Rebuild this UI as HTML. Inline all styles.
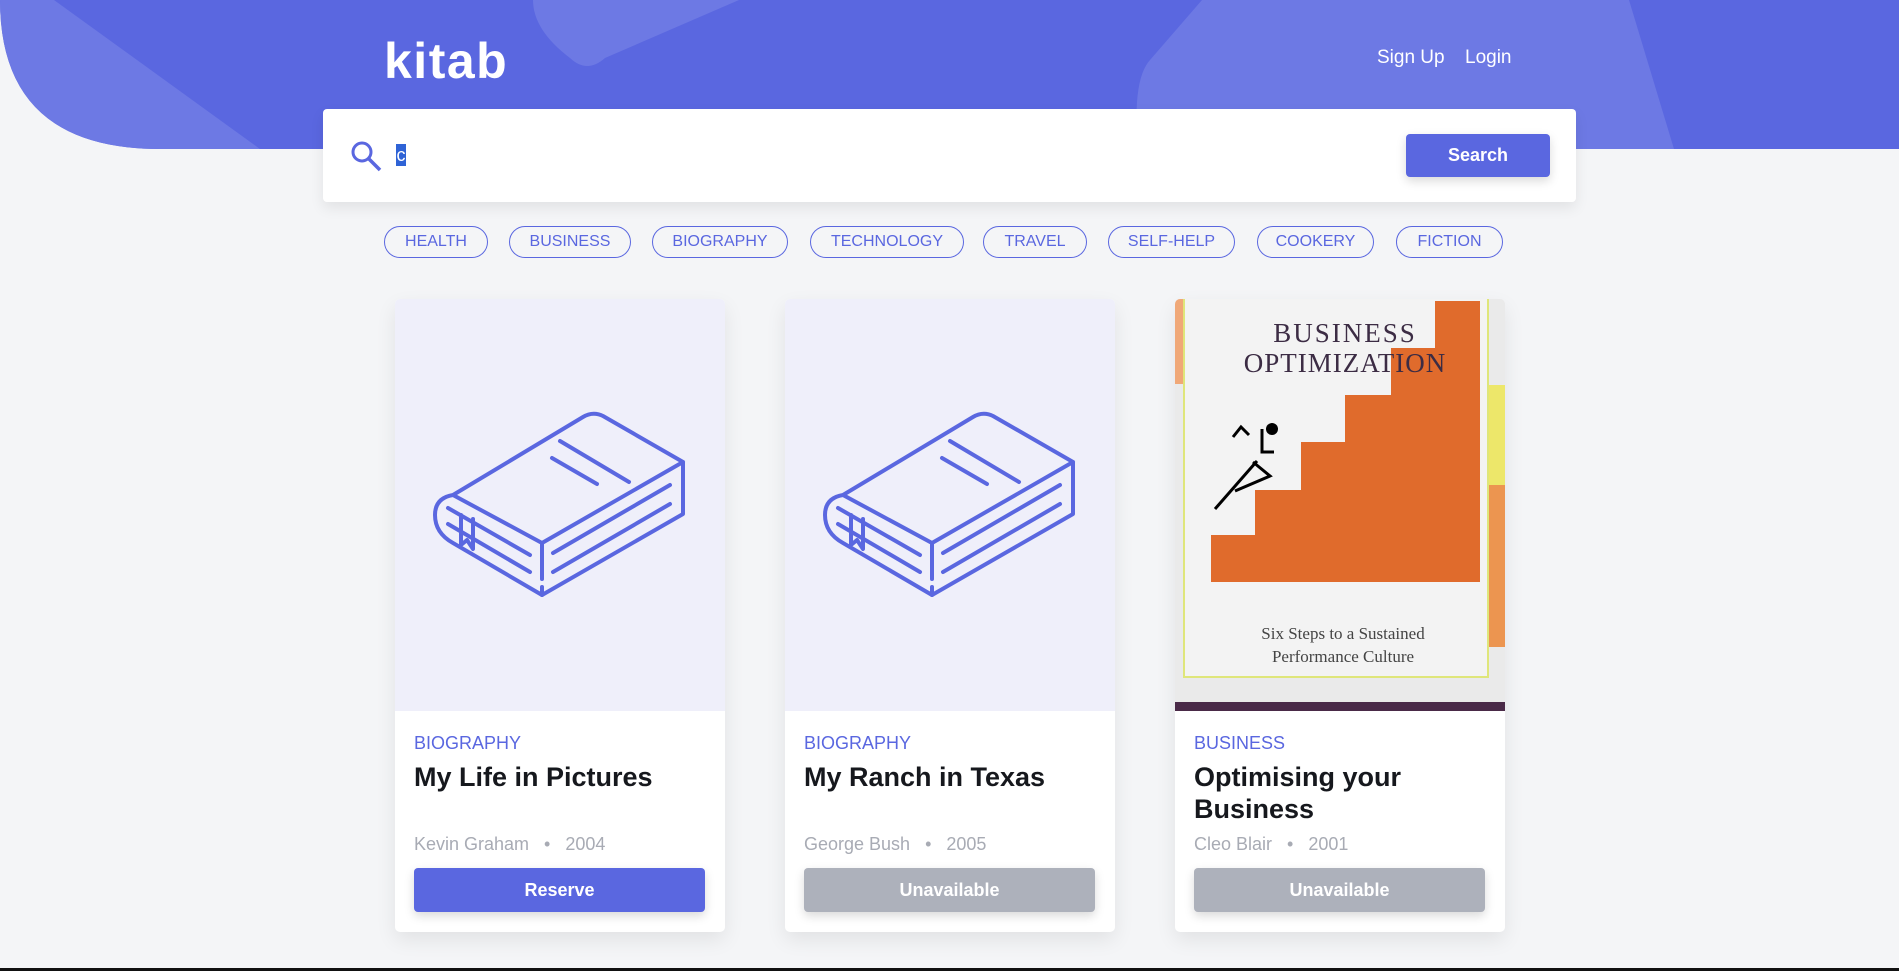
<!DOCTYPE html>
<html><head><meta charset="utf-8"><style>
*{margin:0;padding:0;box-sizing:border-box}
body{width:1899px;height:971px;background:#f4f5f7;font-family:"Liberation Sans",sans-serif;position:relative;overflow:hidden}
.abs{position:absolute}
.logo{left:384px;top:32px;font-size:50px;font-weight:bold;color:#fff;letter-spacing:1.5px}
.nav{top:47px;color:#fff;font-size:19px}
.search{left:323px;top:109px;width:1253px;height:93px;background:#fff;border-radius:4px;box-shadow:0 6px 14px rgba(0,0,0,.08)}
.sbtn{left:1083px;top:25px;width:144px;height:43px;background:#5a67e0;border-radius:4px;color:#fff;font-weight:bold;font-size:18px;text-align:center;line-height:43px;box-shadow:0 4px 10px rgba(0,0,0,.15)}
.chip{top:226px;height:32px;border:1px solid #5a67e0;border-radius:16px;color:#5a67e0;font-size:16px;line-height:30px;text-align:center}
.card{top:299px;width:330px;height:633px;background:#fff;border-radius:5px;box-shadow:0 8px 20px rgba(0,0,0,.08);overflow:hidden}
.img{left:0;top:0;width:330px;height:412px;background:#efeffa}
.cat{left:19px;top:434px;color:#5a67e0;font-size:18px}
.title{left:19px;top:462px;width:300px;color:#16181d;font-size:27px;font-weight:bold;line-height:32px}
.meta{left:19px;top:535px;color:#a8abb4;font-size:18px}
.btn{left:19px;top:569px;width:291px;height:44px;border-radius:4px;color:#fff;font-weight:bold;font-size:18px;text-align:center;line-height:44px;box-shadow:0 4px 10px rgba(0,0,0,.15)}
</style></head><body>
<svg class="abs" style="left:0;top:0" width="1899" height="150">
<path d="M0 0H1899V149H160Q0 149 0 0Z" fill="#5a67e0"/>
<path d="M0 0H54L260 149H160Q0 149 0 0Z" fill="#6d79e4"/>
<path d="M533 0H739L605 58Q587 74 570 58Q533 30 533 0Z" fill="#6d79e4"/>
<path d="M1202 0H1629L1674 149H1138Q1132 80 1150 60Z" fill="#6d79e4"/>
</svg>
<div class="abs logo">kitab</div>
<div class="abs nav" style="left:1377px">Sign Up</div>
<div class="abs nav" style="left:1465px">Login</div>
<div class="abs search">
<svg class="abs" style="left:27px;top:31px" width="36" height="34"><circle cx="12" cy="12" r="9" fill="none" stroke="#5a67e0" stroke-width="3"/><line x1="18.5" y1="18.5" x2="30" y2="30" stroke="#5a67e0" stroke-width="3.5"/></svg>
<div class="abs" style="left:73px;top:35px;width:10px;height:22px;background:#2f63d6;color:#fff;font-size:18px;line-height:22px;text-align:center">c</div>
<div class="abs sbtn">Search</div>
</div>
<div class="abs chip" style="left:384px;width:104px">HEALTH</div>
<div class="abs chip" style="left:509px;width:122px">BUSINESS</div>
<div class="abs chip" style="left:652px;width:136px">BIOGRAPHY</div>
<div class="abs chip" style="left:810px;width:154px">TECHNOLOGY</div>
<div class="abs chip" style="left:983px;width:104px">TRAVEL</div>
<div class="abs chip" style="left:1108px;width:127px">SELF-HELP</div>
<div class="abs chip" style="left:1257px;width:117px">COOKERY</div>
<div class="abs chip" style="left:1396px;width:107px">FICTION</div>

<div class="abs card" style="left:395px">
<div class="abs img"><svg width="330" height="412" fill="none" stroke="#5a67e0" stroke-width="4" stroke-linecap="round" stroke-linejoin="round">
<path d="M58 196L188 118Q198 112 208 117L288 163L147 244L58 196Q40 199 40 216Q40 234 58 244L147 296L288 215V163"/>
<path d="M147 244V280M147 288V296"/><path d="M158 254L275 186M158 273L275 205"/>
<path d="M53 209L135 256M53 225L135 273"/><path d="M165 142L234 183M157 159L202 185"/>
<path d="M66 216V246L72 241L78 250V220"/></svg></div>
<div class="abs cat">BIOGRAPHY</div>
<div class="abs title">My Life in Pictures</div>
<div class="abs meta">Kevin Graham &nbsp;&nbsp;•&nbsp;&nbsp; 2004</div>
<div class="abs btn" style="background:#5a67e0">Reserve</div>
</div>

<div class="abs card" style="left:785px">
<div class="abs img"><svg width="330" height="412" fill="none" stroke="#5a67e0" stroke-width="4" stroke-linecap="round" stroke-linejoin="round">
<path d="M58 196L188 118Q198 112 208 117L288 163L147 244L58 196Q40 199 40 216Q40 234 58 244L147 296L288 215V163"/>
<path d="M147 244V280M147 288V296"/><path d="M158 254L275 186M158 273L275 205"/>
<path d="M53 209L135 256M53 225L135 273"/><path d="M165 142L234 183M157 159L202 185"/>
<path d="M66 216V246L72 241L78 250V220"/></svg></div>
<div class="abs cat">BIOGRAPHY</div>
<div class="abs title">My Ranch in Texas</div>
<div class="abs meta">George Bush &nbsp;&nbsp;•&nbsp;&nbsp; 2005</div>
<div class="abs btn" style="background:#adb1bb">Unavailable</div>
</div>

<div class="abs card" style="left:1175px">
<div class="abs img" style="background:#ececec">
<svg width="330" height="412">
<rect width="330" height="412" fill="#eaeaea"/>
<rect x="0" y="0" width="25" height="85" fill="#f0a878"/>
<rect x="298" y="86" width="32" height="100" fill="#ede76a"/>
<rect x="298" y="186" width="32" height="162" fill="#ec9550"/>
<rect x="9" y="-2" width="304" height="380" fill="#f3f3f3" stroke="#dfe67a" stroke-width="2"/>
<path d="M260 2H305V283H36V236H80V191H126V143H170V96H216V49H260Z" fill="#e06b2c"/>
<text x="170" y="43" text-anchor="middle" font-family="Liberation Serif,serif" font-size="27" fill="#3c2c44" letter-spacing="2">BUSINESS</text>
<text x="170" y="73" text-anchor="middle" font-family="Liberation Serif,serif" font-size="27" fill="#3c2c44" letter-spacing="1">OPTIMIZATION</text>
<circle cx="97" cy="130" r="6" fill="#000"/>
<path d="M58 138L66 128L74 136M87 130V153H99M82 162L40 210M78 163L95 177L60 192" stroke="#000" stroke-width="3" fill="none"/>
<text x="168" y="340" text-anchor="middle" font-family="Liberation Serif,serif" font-size="17" fill="#444">Six Steps to a Sustained</text>
<text x="168" y="363" text-anchor="middle" font-family="Liberation Serif,serif" font-size="17" fill="#444">Performance Culture</text>
<rect x="0" y="403" width="330" height="9" fill="#4a2a48"/>
</svg></div>
<div class="abs cat">BUSINESS</div>
<div class="abs title">Optimising your Business</div>
<div class="abs meta">Cleo Blair &nbsp;&nbsp;•&nbsp;&nbsp; 2001</div>
<div class="abs btn" style="background:#adb1bb">Unavailable</div>
</div>
<div class="abs" style="left:0;top:968px;width:1899px;height:3px;background:#111"></div>
</body></html>
